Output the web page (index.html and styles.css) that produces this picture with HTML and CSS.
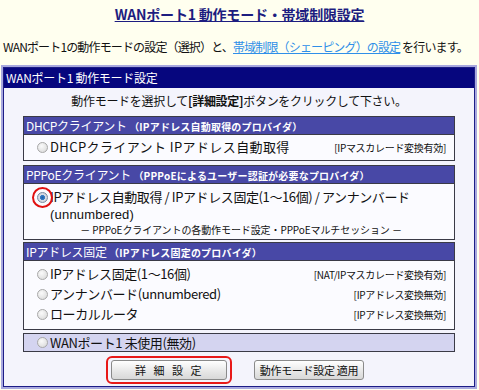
FILE: index.html
```html
<!DOCTYPE html>
<html lang="ja">
<head>
<meta charset="utf-8">
<link rel="stylesheet" href="styles.css">
</head>
<body>
<div class="title"><span>WANポート1 動作モード・帯域制限設定</span></div>
<div class="intro">WANポート1の動作モードの設定（選択）と、<a href="#">帯域制限（シェーピング）の設定</a> を行います。</div>
<div class="panel">
  <div class="panel-inner">
    <div class="panel-head">WANポート1 動作モード設定</div>
    <div class="instr">動作モードを選択して<b>[詳細設定]</b>ボタンをクリックして下さい。</div>
    <div class="sections">
      <div class="sec">
        <div class="sec-head">DHCPクライアント <small>（IPアドレス自動取得のプロバイダ）</small></div>
        <div class="sec-body dhcp">
          <div class="row"><span class="radio"></span><span class="label wide-label">DHCPクライアント IPアドレス自動取得</span><span class="note">[IPマスカレード変換有効]</span></div>
        </div>
      </div>
      <div class="sec gap4">
        <div class="sec-head">PPPoEクライアント <small>（PPPoEによるユーザー認証が必要なプロバイダ）</small></div>
        <div class="sec-body pppoe">
          <div class="row top"><span class="radio on"><span class="ring"></span></span><span class="label two">IPアドレス自動取得 / IPアドレス固定(1〜16個) / アンナンバード<br><span class="latin">(unnumbered)</span></span></div>
          <div class="sub">－ PPPoEクライアントの各動作モード設定・PPPoEマルチセッション －</div>
        </div>
      </div>
      <div class="sec gap2">
        <div class="sec-head">IPアドレス固定 <small>（IPアドレス固定のプロバイダ）</small></div>
        <div class="sec-body list">
          <div class="row"><span class="radio"></span><span class="label">IPアドレス固定(1〜16個)</span><span class="note">[NAT/IPマスカレード変換有効]</span></div>
          <div class="row"><span class="radio"></span><span class="label">アンナンバード(unnumbered)</span><span class="note">[IPアドレス変換無効]</span></div>
          <div class="row"><span class="radio"></span><span class="label">ローカルルータ</span><span class="note">[IPアドレス変換無効]</span></div>
        </div>
      </div>
      <div class="sec unused gap3">
        <div class="row"><span class="radio"></span><span class="label">WANポート1 未使用(無効)</span></div>
      </div>
    </div>
    <div class="buttons">
      <span class="hl"><button class="btn wide">詳 細 設 定</button></span>
      <button class="btn apply">動作モード設定 適用</button>
    </div>
  </div>
</div>
</body>
</html>
```
FILE: styles.css
```css
html, body {
  margin: 0;
  padding: 0;
}
body {
  background: #ffffef;
  font-family: "Noto Sans CJK JP", "Noto Sans", sans-serif;
  font-size: 12px;
  color: #111;
  width: 479px;
  height: 390px;
  overflow: hidden;
}
.title {
  text-align: center;
  padding-top: 4px;
  height: 24px;
  line-height: 20px;
}
.title span {
  font-size: 14px;
  font-weight: bold;
  color: #1d1d80;
  text-decoration: underline;
  letter-spacing: -0.2px;
}
.intro {
  padding-left: 3px;
  margin-top: 10px;
  height: 21px;
  line-height: 18px;
  letter-spacing: -0.85px;
  white-space: nowrap;
}
.intro a {
  color: #2f8fe8;
  text-decoration: underline;
}
.panel {
  margin: 6px 0 0 1px;
  width: 472px;
  border: 2px solid #a8a8de;
}
.panel-inner {
  border: 1px solid #1c1c86;
  background: #f4f4fc;
  padding-bottom: 2px;
}
.panel-head {
  background: #06067e;
  color: #fff;
  height: 20px;
  line-height: 20px;
  padding-left: 2px;
  letter-spacing: -0.3px;
}
.instr {
  text-align: center;
  height: 28px;
  line-height: 26px;
  letter-spacing: -0.3px;
}
.sections {
  margin: 0 19px;
  display: flex;
  flex-direction: column;
}
.gap4 { margin-top: 4px; }
.gap3 { margin-top: 3px; }
.gap2 { margin-top: 2px; }
.sec {
  border: 1px solid #3a3a46;
  background: #fbfbff;
}
.sec-head {
  background: #4848a6;
  color: #fff;
  height: 17px;
  line-height: 17px;
  padding-left: 2px;
  border-bottom: 1px solid #3a3a46;
  letter-spacing: -0.3px;
}
.sec-head small {
  font-size: 10px;
  font-weight: bold;
  letter-spacing: 0.2px;
}
.sec-body {
  padding: 2px 8px 3px 12px;
}
.row {
  display: flex;
  align-items: center;
  height: 20px;
}
.row.top {
  align-items: flex-start;
  height: auto;
}
.radio {
  position: relative;
  flex: none;
  width: 9px;
  height: 9px;
  border-radius: 50%;
  border: 1px solid #a8a8a8;
  background: radial-gradient(circle at 40% 35%, #fafafa, #d6d6d6);
  margin-left: 1px;
  margin-right: 2px;
}
.row.top .radio {
  margin-top: 4px;
}
.radio.on {
  border-color: #7a8aa0;
  background: radial-gradient(circle at 50% 50%, #1d5fa8 0, #3a7cc4 35%, #d8dde6 45%, #c4c8d0 100%);
}
.ring {
  position: absolute;
  left: -6px;
  top: -6px;
  width: 17px;
  height: 17px;
  border: 2px solid #e01010;
  border-radius: 50%;
}
.label {
  flex: 1;
  font-size: 13px;
  line-height: 16px;
  letter-spacing: -0.4px;
  white-space: nowrap;
}
.label.two {
  line-height: 17px;
}
.latin {
  font-family: "Liberation Sans", sans-serif;
  letter-spacing: 0.2px;
}
.wide-label {
  letter-spacing: 0.4px;
}
.note {
  font-size: 10px;
  letter-spacing: -0.3px;
  white-space: nowrap;
}
.pppoe {
  padding-top: 4px;
  padding-bottom: 2px;
}
.sub {
  text-align: center;
  font-size: 10px;
  line-height: 14px;
  letter-spacing: -0.1px;
}
.list {
  padding-top: 3px;
  padding-bottom: 5px;
}
.unused {
  background: #d4d4f0;
  padding-left: 12px;
}
.unused .row {
  height: 17px;
}
.buttons {
  display: flex;
  justify-content: center;
  align-items: center;
  gap: 22px;
  padding-top: 4px;
  padding-right: 8px;
}
.hl {
  border: 2px solid #e81818;
  border-radius: 6px;
  padding: 2px 3px;
  display: inline-flex;
}
.btn {
  font-family: "Noto Sans CJK JP", sans-serif;
  font-size: 11px;
  height: 20px;
  padding: 0 8px;
  border: 1px solid #8a8a8a;
  border-radius: 3px;
  background: linear-gradient(#ffffff, #e6e6e6 60%, #d8d8d8);
  color: #111;
  line-height: 18px;
}
.btn.wide {
  width: 116px;
  letter-spacing: 1.5px;
  word-spacing: 2px;
}
.apply {
  width: 110px;
  padding: 0;
  letter-spacing: -0.3px;
}
```
